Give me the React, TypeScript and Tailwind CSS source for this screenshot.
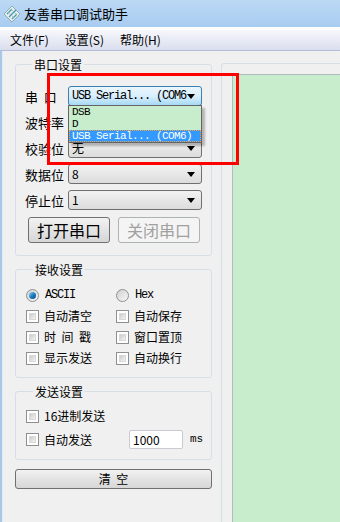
import React from "react";

const cjk = "font-['Noto_Sans_CJK_SC',sans-serif]";
const mono = "font-['Liberation_Mono','Noto_Sans_CJK_SC',monospace]";

const Arrow = () => (
  <svg width="8" height="5" viewBox="0 0 8 5" className="ml-auto mr-[6px] shrink-0">
    <polygon points="0,0 8,0 4,5" fill="#000" />
  </svg>
);

const Combo = ({ value, focused }: { value: string; focused?: boolean }) => (
  <div
    className={`flex items-center h-[20px] w-[134px] rounded-[3px] border pl-[3px] overflow-hidden ${
      focused
        ? "border-[#3c7fb1] bg-gradient-to-b from-[#eaf6fd] via-[#d9effc] to-[#a7d9f5]"
        : "border-[#707070] bg-gradient-to-b from-[#f2f2f2] to-[#dcdcdc]"
    }`}
  >
    <span className={`${focused ? mono + " text-[12px] tracking-[-1.2px]" : cjk + " text-[12px]"} whitespace-nowrap overflow-hidden w-[116px] leading-none text-black`}>
      {value}
    </span>
    <Arrow />
  </div>
);

const Check = ({ label, spaced }: { label: string; spaced?: boolean }) => (
  <div className="flex items-center h-[16px]">
    <div className="w-[13px] h-[13px] border border-[#8e8f8f] bg-white p-[2px] shrink-0">
      <div className="w-full h-full bg-gradient-to-br from-[#cbcbcb] to-[#f4f4f4] border border-[#d8d8d8]" />
    </div>
    <span className={`${cjk} text-[12px] ml-[5px] whitespace-nowrap text-black leading-none ${spaced ? "tracking-[5.5px]" : ""}`}>{label}</span>
  </div>
);

const Radio = ({ label, checked }: { label: string; checked?: boolean }) => (
  <div className="flex items-center h-[16px]">
    <div className="w-[13px] h-[13px] rounded-full border border-[#8e8f8f] bg-gradient-to-br from-[#d0d0d0] to-[#f8f8f8] flex items-center justify-center shrink-0">
      {checked && (
        <div className="w-[7px] h-[7px] rounded-full bg-gradient-to-br from-[#8ad0f5] via-[#1b7fc4] to-[#0c4a7d]" />
      )}
    </div>
    <span className={`${mono} text-[12px] tracking-[-1.2px] ml-[6px] leading-none text-black`}>{label}</span>
  </div>
);

const Group = ({ title, className, children }: { title: string; className?: string; children: React.ReactNode }) => (
  <fieldset className={`border border-[#d5dfe5] rounded-[3px] w-[197px] ${className ?? ""}`}>
    <legend className={`${cjk} text-[12px] leading-[15px] ml-[7px] px-[2px] text-black`}>{title}</legend>
    {children}
  </fieldset>
);

const Row = ({ label, children }: { label: string; children: React.ReactNode }) => (
  <div className="flex items-center h-[20px]">
    <span className={`${cjk} text-[13px] w-[43px] whitespace-pre leading-none text-black`}>{label}</span>
    {children}
  </div>
);

export default function App() {
  return (
    <div className={`relative w-[340px] h-[522px] overflow-hidden bg-[#f0f0f0] ${cjk}`}>
      {/* title bar */}
      <div className="h-[27px] flex items-center bg-gradient-to-b from-[#bcd9f5] to-[#a8ccf0]">
        <svg width="18" height="18" viewBox="0 0 18 18" className="ml-[3px]">
          <polygon points="9,1 17,9 9,17 1,9" fill="#e8eef0" stroke="#7fa0a8" strokeWidth="0.8" />
          <path d="M4 9 L9 4 M6 12 L13 5 M9 14 L14 9" stroke="#3c9aa8" strokeWidth="1.2" />
          <path d="M5 7 L11 13 M8 4 L14 10" stroke="#9ab6bc" strokeWidth="0.8" />
        </svg>
        <span className="ml-[3px] text-[13px] text-black leading-none">友善串口调试助手</span>
      </div>

      {/* menu bar */}
      <div className="h-[24px] border-t-[3px] border-white border-b border-b-[#b6bcd4] bg-gradient-to-b from-[#f7f8fc] to-[#d9deee] flex items-center gap-[16px] pl-[10px] text-[12px] text-black">
        <span>文件(F)</span>
        <span>设置(S)</span>
        <span>帮助(H)</span>
      </div>

      {/* body */}
      <div className="flex h-[471px]">
        <div className="w-[3px] bg-[#a9c8e8] border-r border-[#e2ecf7]" />

        <div className="w-[216px] pl-[12px] pt-[6px] flex flex-col">
          <Group title="串口设置" className="pl-[9px] pt-[14px] pb-[12px]">
            <div className="flex flex-col gap-[6px]">
              <Row label="串  口">
                <Combo value="USB Serial... (COM6)" focused />
              </Row>
              <Row label="波特率">
                <Combo value="" />
              </Row>
              <Row label="校验位">
                <Combo value="无" />
              </Row>
              <Row label="数据位">
                <Combo value="8" />
              </Row>
              <Row label="停止位">
                <Combo value="1" />
              </Row>
            </div>
            <div className="flex gap-[8px] mt-[7px] ml-[3px]">
              <div className="w-[82px] h-[26px] rounded-[3px] border border-[#707070] bg-gradient-to-b from-[#f2f2f2] to-[#d6d6d6] flex items-center justify-center text-[16px] text-black leading-none">
                打开串口
              </div>
              <div className="w-[82px] h-[26px] rounded-[3px] border border-[#adb2b5] bg-[#f4f4f4] flex items-center justify-center text-[16px] text-[#a0a0a0] leading-none">
                关闭串口
              </div>
            </div>
          </Group>

          <Group title="接收设置" className="mt-[6px] pl-[10px] pt-[10px] pb-[11px]">
            <div className="grid grid-cols-[90px_1fr] gap-y-[5px]">
              <Radio label="ASCII" checked />
              <Radio label="Hex" />
              <Check label="自动清空" />
              <Check label="自动保存" />
              <Check label="时间戳" spaced />
              <Check label="窗口置顶" />
              <Check label="显示发送" />
              <Check label="自动换行" />
            </div>
          </Group>

          <Group title="发送设置" className="mt-[6px] pl-[10px] pt-[9px] pb-[10px]">
            <Check label="16进制发送" />
            <div className="flex items-center mt-[6px]">
              <div className="w-[103px]">
                <Check label="自动发送" />
              </div>
              <div className="w-[54px] h-[19px] border border-[#c8ccd2] rounded-[2px] bg-white flex items-center pl-[3px] text-[12px] text-black leading-none">
                1000
              </div>
              <span className={`${mono} text-[11px] ml-[7px] text-black`}>ms</span>
            </div>
          </Group>

          <div className="mt-[9px] w-[197px] h-[20px] rounded-[3px] border border-[#707070] bg-gradient-to-b from-[#f2f2f2] to-[#d6d6d6] flex items-center justify-center text-[12px] text-black leading-none whitespace-pre">
            清  空
          </div>
        </div>

        <div className="flex-1 pt-[12px] pl-[2px]">
          <div className="h-full rounded-tl-[3px] border-l border-t border-[#d5dfe5] pl-[10px] pt-[10px]">
            <div className="h-full bg-[#c7edcc] border-l border-t border-[#b4b9c2]" />
          </div>
        </div>
      </div>

      {/* open dropdown list */}
      <div className={`absolute left-[68px] top-[105px] w-[134px] bg-[#c7edcc] border border-[#646464] shadow-[3px_3px_2px_rgba(0,0,0,0.25)] ${mono} text-[11px] tracking-[-0.6px] leading-[12px]`}>
        <div className="h-[12px] pl-[3px] text-black">DSB</div>
        <div className="h-[12px] pl-[3px] text-black">D</div>
        <div className="h-[12px] pl-[3px] bg-[#3399ff] text-white outline-1 outline-dotted outline-[#f0a040] -outline-offset-1">USB Serial... (COM6)</div>
      </div>

      {/* red annotation frame */}
      <div className="absolute left-[47px] top-[73px] w-[192px] h-[92px] border-[3px] border-[#ff0000]" />
    </div>
  );
}
